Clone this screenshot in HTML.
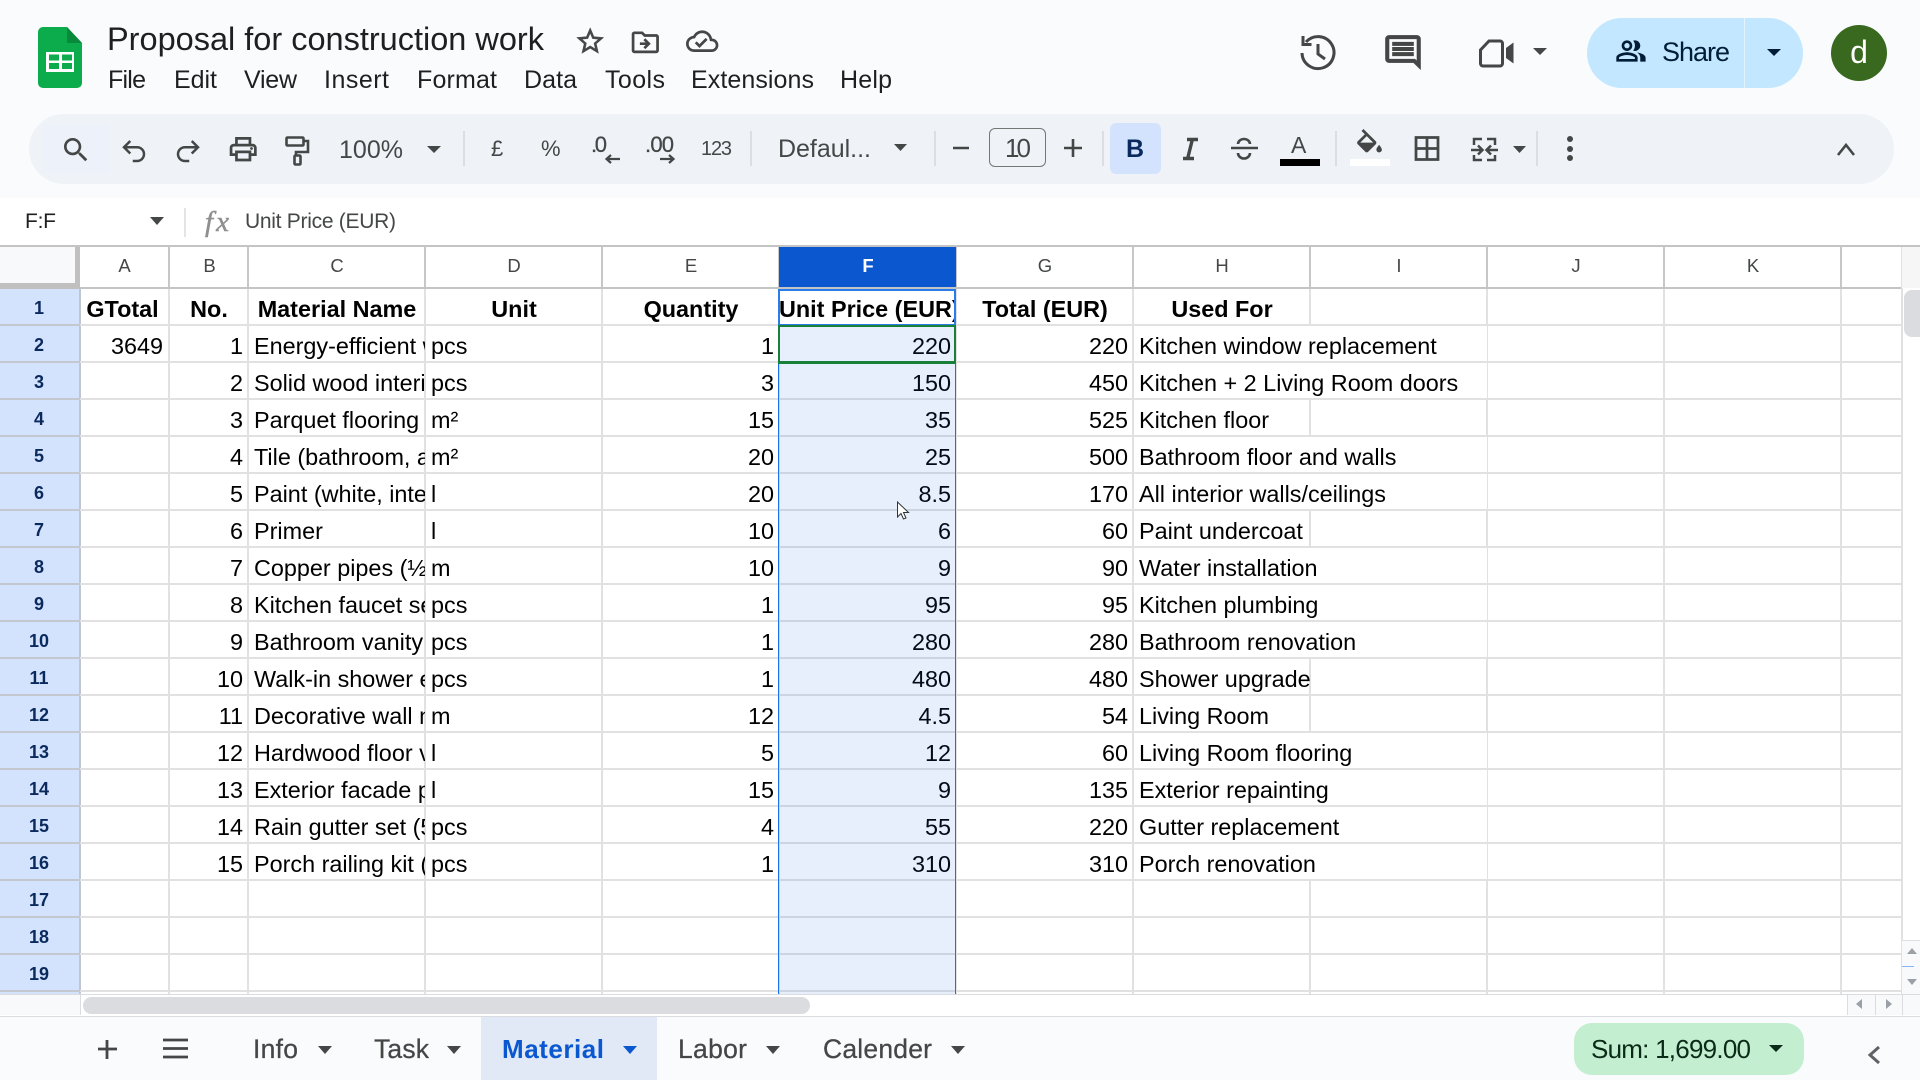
<!DOCTYPE html>
<html lang="en"><head><meta charset="utf-8"><title>Proposal for construction work</title>
<style>
html,body{margin:0;padding:0;width:1920px;height:1080px;overflow:hidden;background:#fff}
body{position:relative;font-family:"Liberation Sans",Arial,sans-serif;color:#000}
.bx{position:absolute}
.v{position:absolute;top:247px;height:747px;width:2px;background:linear-gradient(#c7c7c7 41px,#e1e1e1 41px)}
.r{position:absolute;left:0;width:1901px;height:37px;font-size:23.4px}
.r:before{content:"";position:absolute;left:0;width:80px;bottom:0;height:2px;background:#c3c7ce}
.r:after{content:"";position:absolute;left:80px;right:0;bottom:0;height:2px;background:#e1e1e1}
.r span{position:absolute;top:0;height:35px;line-height:40px;overflow:hidden;white-space:nowrap;box-sizing:border-box}
.r .n{left:0;width:78px;text-align:center;font-weight:bold;font-size:18px;line-height:38px;color:#0a2a5e}
.A{left:81px;width:87px;text-align:right;padding-right:5px}
.B{left:170px;width:78px;text-align:right;padding-right:5px}
.C{left:249px;width:176px;padding-left:5px}
.D{left:426px;width:176px;padding-left:5px}
.E{left:603px;width:176px;text-align:right;padding-right:5px}
.F{left:780px;width:176px;text-align:right;padding-right:5px}
.G{left:957px;width:176px;text-align:right;padding-right:5px}
.H{left:1134px;width:176px;padding-left:5px}
.H.o{width:353px;background:#fff}
.h{font-weight:bold;text-align:center!important;padding:0!important}
.ch{position:absolute;top:247px;height:40px;line-height:38px;text-align:center;font-size:18.5px;color:#444746;padding-left:1px;box-sizing:border-box}
svg{position:absolute;left:0;top:0}
text{font-family:"Liberation Sans",Arial,sans-serif}
</style></head><body>
<div class="bx" style="left:0;top:0;width:1920px;height:198px;background:#f9fbfd"></div>
<div class="bx" style="left:29px;top:114px;width:1865px;height:70px;border-radius:35px;background:#eff3f8"></div>
<div class="bx" style="left:43px;top:124px;width:66px;height:49px;background:#edf2fa"></div>
<div class="bx" style="left:1110px;top:123px;width:51px;height:51px;border-radius:6px;background:#d3e3fd"></div>
<div class="bx" style="left:989px;top:128px;width:55px;height:37px;border:1.5px solid #747775;border-radius:6px"></div>
<div class="bx" style="left:1587px;top:18px;width:216px;height:70px;border-radius:35px;background:#c2e7ff"></div>
<div class="bx" style="left:1744px;top:18px;width:1px;height:70px;background:#e3f3ff"></div>
<div class="bx" style="left:1831px;top:25px;width:56px;height:56px;border-radius:50%;background:#38691f;color:#fff;font-size:32px;line-height:54px;text-align:center">d</div>

<!-- grid -->
<div class="bx" style="left:0;top:245px;width:1920px;height:2px;background:#c4c4c4"></div>
<div class="bx" style="left:0;top:247px;width:75px;height:36px;background:#f8f9fa"></div>
<div class="bx" style="left:75px;top:247px;width:5px;height:42px;background:#c0c0c0"></div>
<div class="bx" style="left:0;top:283px;width:80px;height:6px;background:#c0c0c0"></div>
<div class="bx" style="left:0;top:289px;width:79px;height:705px;background:#d3e3fd"></div>
<div class="bx" style="left:79px;top:289px;width:1.5px;height:705px;background:#c0c5ce"></div>
<div class="v" style="left:168px"></div><div class="v" style="left:247px"></div><div class="v" style="left:424px"></div><div class="v" style="left:601px"></div><div class="v" style="left:778px"></div><div class="v" style="left:955px"></div><div class="v" style="left:1132px"></div><div class="v" style="left:1309px"></div><div class="v" style="left:1486px"></div><div class="v" style="left:1663px"></div><div class="v" style="left:1840px"></div><div class="v" style="left:1901px;background:#e1e1e1"></div>
<div class="bx" style="left:80px;top:287px;width:1821px;height:2px;background:#c4c4c4"></div>

<div class="ch" style="left:80px;width:88px">A</div><div class="ch" style="left:170px;width:78px">B</div><div class="ch" style="left:248px;width:177px">C</div><div class="ch" style="left:425px;width:177px">D</div><div class="ch" style="left:602px;width:177px">E</div>
<div class="ch" style="left:779px;width:177px;background:#0b57d0;color:#fff;font-weight:bold">F</div>
<div class="ch" style="left:956px;width:177px">G</div><div class="ch" style="left:1133px;width:177px">H</div><div class="ch" style="left:1310px;width:177px">I</div><div class="ch" style="left:1487px;width:177px">J</div><div class="ch" style="left:1664px;width:177px">K</div>

<div class="r" style="top:289px"><span class="n">1</span><span class="A h" style="left:79px">GTotal</span><span class="B h">No.</span><span class="C h">Material Name</span><span class="D h">Unit</span><span class="E h">Quantity</span><span class="F h" style="left:779px;width:177px">Unit Price (EUR)</span><span class="G h">Total (EUR)</span><span class="H h">Used For</span></div>
<div class="r" style="top:326px"><span class="n">2</span><span class="A">3649</span><span class="B">1</span><span class="C">Energy-efficient windows</span><span class="D">pcs</span><span class="E">1</span><span class="F">220</span><span class="G">220</span><span class="H o">Kitchen window replacement</span></div>
<div class="r" style="top:363px"><span class="n">3</span><span class="B">2</span><span class="C">Solid wood interior doors</span><span class="D">pcs</span><span class="E">3</span><span class="F">150</span><span class="G">450</span><span class="H o">Kitchen + 2 Living Room doors</span></div>
<div class="r" style="top:400px"><span class="n">4</span><span class="B">3</span><span class="C">Parquet flooring</span><span class="D">m²</span><span class="E">15</span><span class="F">35</span><span class="G">525</span><span class="H">Kitchen floor</span></div>
<div class="r" style="top:437px"><span class="n">5</span><span class="B">4</span><span class="C">Tile (bathroom, and kitchen)</span><span class="D">m²</span><span class="E">20</span><span class="F">25</span><span class="G">500</span><span class="H o">Bathroom floor and walls</span></div>
<div class="r" style="top:474px"><span class="n">6</span><span class="B">5</span><span class="C">Paint (white, interior)</span><span class="D">l</span><span class="E">20</span><span class="F">8.5</span><span class="G">170</span><span class="H o">All interior walls/ceilings</span></div>
<div class="r" style="top:511px"><span class="n">7</span><span class="B">6</span><span class="C">Primer</span><span class="D">l</span><span class="E">10</span><span class="F">6</span><span class="G">60</span><span class="H">Paint undercoat</span></div>
<div class="r" style="top:548px"><span class="n">8</span><span class="B">7</span><span class="C">Copper pipes (½ inch)</span><span class="D">m</span><span class="E">10</span><span class="F">9</span><span class="G">90</span><span class="H o">Water installation</span></div>
<div class="r" style="top:585px"><span class="n">9</span><span class="B">8</span><span class="C">Kitchen faucet set</span><span class="D">pcs</span><span class="E">1</span><span class="F">95</span><span class="G">95</span><span class="H o">Kitchen plumbing</span></div>
<div class="r" style="top:622px"><span class="n">10</span><span class="B">9</span><span class="C">Bathroom vanity set</span><span class="D">pcs</span><span class="E">1</span><span class="F">280</span><span class="G">280</span><span class="H o">Bathroom renovation</span></div>
<div class="r" style="top:659px"><span class="n">11</span><span class="B">10</span><span class="C">Walk-in shower enclosure</span><span class="D">pcs</span><span class="E">1</span><span class="F">480</span><span class="G">480</span><span class="H">Shower upgrade</span></div>
<div class="r" style="top:696px"><span class="n">12</span><span class="B">11</span><span class="C">Decorative wall molding</span><span class="D">m</span><span class="E">12</span><span class="F">4.5</span><span class="G">54</span><span class="H">Living Room</span></div>
<div class="r" style="top:733px"><span class="n">13</span><span class="B">12</span><span class="C">Hardwood floor varnish</span><span class="D">l</span><span class="E">5</span><span class="F">12</span><span class="G">60</span><span class="H o">Living Room flooring</span></div>
<div class="r" style="top:770px"><span class="n">14</span><span class="B">13</span><span class="C">Exterior facade paint</span><span class="D">l</span><span class="E">15</span><span class="F">9</span><span class="G">135</span><span class="H o">Exterior repainting</span></div>
<div class="r" style="top:807px"><span class="n">15</span><span class="B">14</span><span class="C">Rain gutter set (5m)</span><span class="D">pcs</span><span class="E">4</span><span class="F">55</span><span class="G">220</span><span class="H o">Gutter replacement</span></div>
<div class="r" style="top:844px"><span class="n">16</span><span class="B">15</span><span class="C">Porch railing kit (wood)</span><span class="D">pcs</span><span class="E">1</span><span class="F">310</span><span class="G">310</span><span class="H o">Porch renovation</span></div>
<div class="r" style="top:881px"><span class="n">17</span></div>
<div class="r" style="top:918px"><span class="n">18</span></div>
<div class="r" style="top:955px"><span class="n">19</span></div>

<!-- selection -->
<div class="bx" style="left:779px;top:326px;width:177px;height:668px;background:rgba(26,100,225,.105)"></div>
<div class="bx" style="left:778px;top:326px;width:1px;height:668px;background:#1a73e8"></div>
<div class="bx" style="left:955px;top:326px;width:1px;height:668px;background:#1a73e8"></div>
<div class="bx" style="left:778px;top:289px;width:174px;height:33px;border:2px solid #2a7de8"></div>
<div class="bx" style="left:778px;top:325px;width:174px;height:34px;border:2px solid #188038;border-bottom-width:3px"></div>

<!-- scrollbars and bottom -->
<div class="bx" style="left:1902px;top:247px;width:18px;height:41px;background:#f6f6f6"></div>
<div class="bx" style="left:1904px;top:290px;width:16px;height:47px;border-radius:8px 0 0 8px;background:#dadce0"></div>
<div class="bx" style="left:1902px;top:940px;width:18px;height:54px;background:#f8f9fa;border-top:1px solid #e1e1e1;box-sizing:border-box"></div>
<div class="bx" style="left:1902px;top:966px;width:12px;height:1px;background:#8ab4f8"></div>
<div class="bx" style="left:0;top:994px;width:1920px;height:23px;background:#fff;border-top:1px solid #dadce0;border-bottom:1.5px solid #dadce0;box-sizing:border-box"></div>
<div class="bx" style="left:0;top:995px;width:80px;height:20px;background:#f8f9fa;border-right:1px solid #dadce0"></div>
<div class="bx" style="left:83px;top:997px;width:727px;height:17px;border-radius:8.5px;background:#dadce0"></div>
<div class="bx" style="left:1847px;top:995px;width:73px;height:20px;background:#f8f9fa"></div>
<div class="bx" style="left:1847px;top:995px;width:1px;height:20px;background:#dadce0"></div>
<div class="bx" style="left:1875px;top:995px;width:1px;height:20px;background:#dadce0"></div>
<div class="bx" style="left:1902px;top:995px;width:1px;height:20px;background:#dadce0"></div>
<div class="bx" style="left:0;top:1017px;width:1920px;height:63px;background:#f9fbfd"></div>
<div class="bx" style="left:481px;top:1017px;width:176px;height:63px;background:#e1e9f7"></div>
<div class="bx" style="left:1574px;top:1023px;width:230px;height:52px;border-radius:18px;background:#c4eed0"></div>

<svg width="1920" height="1080" viewBox="0 0 1920 1080" xmlns="http://www.w3.org/2000/svg">
<!-- logo -->
<path d="M43 27h24l15 16v40a5 5 0 0 1-5 5H43a5 5 0 0 1-5-5V32a5 5 0 0 1 5-5z" fill="#0cab4b"/>
<path d="M67 27l15 16H67z" fill="#088a3a"/>
<rect x="46" y="52" width="28" height="20" fill="#fff"/>
<rect x="49" y="54.500" width="10" height="6" fill="#0cab4b"/><rect x="62" y="54.500" width="10" height="6" fill="#0cab4b"/><rect x="49" y="63" width="10" height="6" fill="#0cab4b"/><rect x="62" y="63" width="10" height="6" fill="#0cab4b"/>

<text x="107" y="50" font-size="32.500" textLength="437" fill="#1f1f1f">Proposal for construction work</text>
<g font-size="25" fill="#1f1f1f">
<text x="108" y="88" textLength="38">File</text><text x="174" y="88" textLength="43">Edit</text><text x="244" y="88" textLength="53">View</text><text x="324" y="88" textLength="65">Insert</text><text x="417" y="88" textLength="80">Format</text><text x="524" y="88" textLength="53">Data</text><text x="605" y="88" textLength="60">Tools</text><text x="691" y="88" textLength="123">Extensions</text><text x="840" y="88" textLength="52">Help</text>
</g>
<g fill="#444746">
<path transform="translate(574 25) scale(1.35)" stroke="#444746" stroke-width=".3" d="M22 9.240l-7.190-.62L12 2 9.190 8.630 2 9.240l5.460 4.730L5.820 21 12 17.270 18.180 21l-1.630-7.030L22 9.240zM12 15.400l-3.760 2.270 1-4.280-3.320-2.880 4.380-.38L12 6.100l1.710 4.040 4.380.38-3.320 2.880 1 4.280L12 15.400z"/>
<path transform="translate(629 26) scale(1.36)" d="M20 6h-8l-2-2H4c-1.100 0-2 .9-2 2v12c0 1.100.9 2 2 2h16c1.100 0 2-.9 2-2V8c0-1.100-.9-2-2-2zm0 12H4V6h5.170l2 2H20v10zm-8.010-9l-1.410 1.410L12.160 12H8v2h4.160l-1.590 1.590L11.990 17 16 13.010 11.990 9z"/>
<path transform="translate(686 25) scale(1.35)" d="M19.350 10.040C18.670 6.590 15.640 4 12 4 9.110 4 6.600 5.640 5.350 8.040 2.340 8.360 0 10.910 0 14c0 3.310 2.690 6 6 6h13c2.760 0 5-2.240 5-5 0-2.640-2.050-4.780-4.650-4.960zM19 18H6c-2.210 0-4-1.790-4-4 0-2.050 1.530-3.760 3.560-3.970l1.070-.11.5-.95C8.080 7.140 9.940 6 12 6c2.620 0 4.880 1.860 5.390 4.430l.3 1.500 1.530.11c1.560.1 2.780 1.410 2.780 2.960 0 1.650-1.350 3-3 3zm-9-3.820l-2.090-2.090L6.500 13.500 10 17l6.010-6.010-1.410-1.410z"/>
<path transform="translate(1382 32) scale(1.75 1.7)" stroke="#444746" stroke-width=".35" d="M21.990 4c0-1.100-.89-2-1.990-2H4c-1.100 0-2 .9-2 2v12c0 1.100.9 2 2 2h14l4 4-.01-18zM20 4v13.170L18.830 16H4V4h16zM6 12h12v2H6zm0-3h12v2H6zm0-3h12v2H6z"/>
<path d="M1506 48l7.500-5.500v21l-7.500-5.500z"/>
</g>
<g fill="none" stroke="#444746" stroke-width="3">
<path d="M1306 42A16 16 0 1 1 1302 53"/><path d="M1303 36v8.500h8.500"/><path d="M1318 44v10l7 5"/>
<path d="M1489 41h11a2.500 2.500 0 0 1 2.500 2.500v20a2.500 2.500 0 0 1-2.500 2.500h-17a2.500 2.500 0 0 1-2.500-2.500V50z"/>
</g>
<path d="M1533 48h14l-7 7zM427 146h14l-7 7zM894 144h13l-6.500 7zM1513 146h13l-6.500 7zM150 217h14l-7 8zM318 1046h14l-7 8zM447 1046h14l-7 8zM766 1046h14l-7 8zM951 1046h14l-7 8z" fill="#444746"/>
<path d="M623 1046h14l-7 8z" fill="#0b57d0"/>
<path d="M1767 49h14l-7 7z" fill="#001d35"/>
<path d="M1769 1045h14l-7 7z" fill="#0a2b17"/>
<path transform="translate(1615 35) scale(1.33)" fill="#001d35" d="M16.670 13.130C18.040 14.060 19 15.320 19 17v3h4v-3c0-2.180-3.570-3.470-6.330-3.870zM15 12c2.210 0 4-1.790 4-4s-1.790-4-4-4c-.47 0-.91.1-1.330.24C14.500 5.270 15 6.580 15 8s-.5 2.730-1.330 3.760c.42.14.86.24 1.330.24zM9 12c2.210 0 4-1.790 4-4s-1.790-4-4-4-4 1.790-4 4 1.790 4 4 4zm0-6c1.100 0 2 .9 2 2s-.9 2-2 2-2-.9-2-2 .9-2 2-2zM9 13c-2.670 0-8 1.340-8 4v3h16v-3c0-2.660-5.330-4-8-4zm6 5H3v-.99C3.200 16.290 6.300 15 9 15s5.800 1.290 6 2z"/>
<text x="1662" y="61" font-size="27" textLength="68" fill="#001d35">Share</text>

<!-- toolbar icons -->
<path transform="translate(60 134) scale(1.33)" fill="#444746" d="M15.500 14h-.79l-.28-.27C15.410 12.590 16 11.110 16 9.500 16 5.910 13.090 3 9.500 3S3 5.910 3 9.500 5.910 16 9.500 16c1.610 0 3.090-.59 4.230-1.570l.27.28v.79l5 4.990L20.490 19l-4.990-5zm-6 0C7.010 14 5 11.990 5 9.500S7.010 5 9.500 5 14 7.010 14 9.500 11.990 14 9.500 14z"/>
<g fill="none" stroke="#444746" stroke-width="2">
<path transform="translate(119 136) scale(1.25)" d="M9 14L4 9l5-5M4 9h10.500a5.500 5.500 0 0 1 0 11H11"/>
<path transform="translate(173 136) scale(1.25)" d="M15 14l5-5-5-5M20 9H9.500a5.500 5.500 0 0 0 0 11H13"/>
</g>
<path transform="translate(227 133) scale(1.35)" fill="#444746" d="M19 8h-1V3H6v5H5c-1.660 0-3 1.340-3 3v6h4v4h12v-4h4v-6c0-1.660-1.340-3-3-3zM8 5h8v3H8V5zm8 12v2H8v-4h8v2zm2-2v-2H6v2H4v-4c0-.55.45-1 1-1h14c.55 0 1 .45 1 1v4h-2z"/>
<circle cx="251.500" cy="148.500" r="1.400" fill="#444746"/>
<g fill="none" stroke="#444746" stroke-width="2.600">
<rect x="286.500" y="137.500" width="17" height="8" rx="1"/><path d="M304 141h4v11h-12v3"/><rect x="294.500" y="155.500" width="6" height="9" rx="1"/>
<path d="M1231 148h27"/><path d="M1238 144a6 5 0 0 1 12 0"/><path d="M1238 153a6 5.500 0 0 0 12 0"/>
</g>
<g fill="none" stroke="#c7cace" stroke-width="1">
<path d="M464 131v35M751 131v35M935 131v35M1103 131v35M1336 131v35M1537 131v35M185 208v29"/>
</g>
<g fill="#444746" font-size="25">
<text x="339" y="158" textLength="64">100%</text>
<text x="491" y="156" font-size="22" textLength="12">£</text>
<text x="541" y="156" font-size="22" textLength="19">%</text>
<text x="591" y="152" font-size="22" stroke="#444746" stroke-width=".3" textLength="16">.0</text>
<text x="645" y="152" font-size="22" stroke="#444746" stroke-width=".3" textLength="29">.00</text>
<text x="701" y="155" font-size="20" textLength="31">123</text>
<text x="778" y="157" textLength="93">Defaul...</text>
<text x="1005" y="157" font-size="26" textLength="26">10</text>
<text x="1291" y="153" font-size="23" textLength="16">A</text>
</g>
<g fill="none" stroke="#444746" stroke-width="2.200">
<path d="M620 159h-13M611 155l-4.500 4 4.500 4"/><path d="M660 159h13M669 155l4.500 4-4.500 4"/>
<path d="M953 148h16M1064 148h18M1073 139v18" stroke-width="2.600"/>
</g>
<text x="1126" y="157" font-size="25" font-weight="bold" textLength="20" fill="#0a2a5e">B</text>
<g fill="none" stroke="#444746" stroke-width="3.400"><path d="M1187 139.500h11M1183 158.500h11M1192.500 139L1187.500 159"/></g>
<rect x="1280" y="159" width="40" height="7" fill="#000"/>
<rect x="1350" y="159" width="40" height="7" fill="#fff"/>
<path transform="translate(1353 129) scale(1.375)" fill="#444746" d="M16.560 8.940L7.620 0 6.210 1.410l2.380 2.380-5.150 5.150c-.59.59-.59 1.540 0 2.120l5.500 5.500c.29.29.68.44 1.060.44s.77-.15 1.060-.44l5.500-5.500c.59-.58.59-1.530 0-2.120zM5.210 10L10 5.210 14.790 10H5.210zM19 11.500s-2 2.170-2 3.500c0 1.100.9 2 2 2s2-.9 2-2c0-1.330-2-3.500-2-3.500z"/>
<path transform="translate(1353 129) scale(1.375)" fill="#444746" d="M5 10h10l-5 5z"/>
<path transform="translate(1410.500 132) scale(1.375)" fill="#444746" d="M3 3v18h18V3H3zm8 16H5v-6h6v6zm0-8H5V5h6v6zm8 8h-6v-6h6v6zm0-8h-6V5h6v6z"/>
<g fill="none" stroke="#444746" stroke-width="2.500">
<path d="M1482 139h-8v6M1474 155v5h8M1487 139h8v6M1495 155v5h-8"/>
<path d="M1471 150h11M1478 145.500l4.500 4.500-4.500 4.500M1498 150h-11M1491 145.500l-4.500 4.500 4.500 4.500"/>
</g>
<circle cx="1570" cy="139" r="3" fill="#444746"/><circle cx="1570" cy="149" r="3" fill="#444746"/><circle cx="1570" cy="158" r="3" fill="#444746"/>
<path d="M1838 155l8-10 8 10" fill="none" stroke="#444746" stroke-width="2.600"/>

<!-- formula bar -->
<text x="25" y="228" font-size="21" textLength="31" fill="#1f1f1f">F:F</text>
<text x="205" y="231" font-size="29" textLength="24" fill="#8f8f8f" stroke="#8f8f8f" stroke-width=".5" style="font-family:'Liberation Serif',serif;font-style:italic">fx</text>
<text x="245" y="228" font-size="21" textLength="151" fill="#444746">Unit Price (EUR)</text>

<!-- cursor -->
<path d="M897.500 502v15l3.500-3.500 2.500 5.500 2.500-1-2.500-5.500h5z" fill="#fff" stroke="#333" stroke-width="1"/>

<!-- scroll arrows -->
<path d="M1912 948l5 6h-10zM1912 985l5-6h-10zM1862 999v10l-6-5zM1886 999v10l6-5z" fill="#9aa0a6"/>

<!-- bottom -->
<g fill="none" stroke="#444746" stroke-width="2.800">
<path d="M98 1049h19M107 1040v19"/><path d="M163 1040h25M163 1048.500h25M163 1057h25"/>
</g>
<g font-size="26.500" fill="#444746" stroke="#444746" stroke-width=".25">
<text x="253" y="1058" textLength="45">Info</text><text x="374" y="1058" textLength="55">Task</text><text x="678" y="1058" textLength="69">Labor</text><text x="823" y="1058" textLength="109">Calender</text>
</g>
<text x="502" y="1058" font-size="26" font-weight="bold" textLength="102" fill="#0b57d0">Material</text>
<text x="1591" y="1058" font-size="26" textLength="160" fill="#0a2b17">Sum: 1,699.00</text>
<path d="M1879 1047l-9 8 9 8" fill="none" stroke="#5f6368" stroke-width="3"/>
</svg>
</body></html>
